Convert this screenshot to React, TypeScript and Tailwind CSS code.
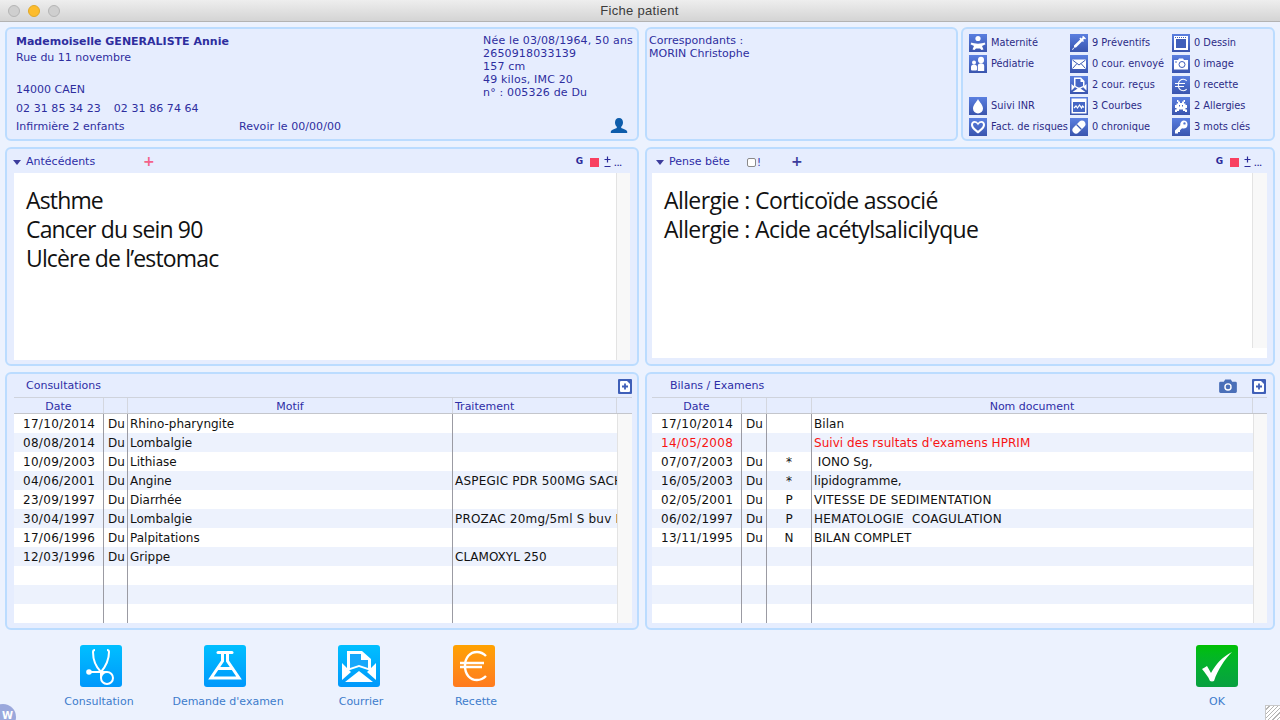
import type { ReactNode } from "react";

const consultations = [
  ["17/10/2014", "Du", "Rhino-pharyngite", ""],
  ["08/08/2014", "Du", "Lombalgie", ""],
  ["10/09/2003", "Du", "Lithiase", ""],
  ["04/06/2001", "Du", "Angine", "ASPEGIC PDR 500MG SACHET"],
  ["23/09/1997", "Du", "Diarrhée", ""],
  ["30/04/1997", "Du", "Lombalgie", "PROZAC 20mg/5ml S buv Fl"],
  ["17/06/1996", "Du", "Palpitations", ""],
  ["12/03/1996", "Du", "Grippe", "CLAMOXYL 250"],
  ["", "", "", ""],
  ["", "", "", ""],
  ["", "", "", ""],
];

const bilans = [
  ["17/10/2014", "Du", "", "Bilan"],
  ["14/05/2008", "", "", "Suivi des rsultats d'examens HPRIM"],
  ["07/07/2003", "Du", "*", "\u00a0IONO Sg,"],
  ["16/05/2003", "Du", "*", "lipidogramme,"],
  ["02/05/2001", "Du", "P", "VITESSE DE SEDIMENTATION"],
  ["06/02/1997", "Du", "P", "HEMATOLOGIE\u00a0 COAGULATION"],
  ["13/11/1995", "Du", "N", "BILAN COMPLET"],
  ["", "", "", ""],
  ["", "", "", ""],
  ["", "", "", ""],
  ["", "", "", ""],
];

function Panel({ className, children }: { className: string; children: ReactNode }) {
  return (
    <div className={`rounded-[6px] border-2 border-[#bbdcff] bg-[#e6edfe] ${className}`}>{children}</div>
  );
}

function Tile({ children }: { children: ReactNode }) {
  return (
    <span className="flex h-[18px] w-[18px] shrink-0 items-center justify-center bg-gradient-to-b from-[#5a7fe0] to-[#3a55ae]">
      <svg viewBox="0 0 18 18" className="h-[18px] w-[18px]" fill="#fff" stroke="none">
        {children}
      </svg>
    </span>
  );
}

function SideItem({ icon, label }: { icon?: ReactNode; label?: string }) {
  return (
    <div className="flex h-[18px] items-center gap-[4px] whitespace-nowrap text-[9.8px] text-[#2b2b86]">
      {icon ? <Tile>{icon}</Tile> : null}
      {label}
    </div>
  );
}

function Triangle() {
  return <span className="h-0 w-0 border-x-[4.5px] border-t-[5px] border-x-transparent border-t-[#3c3c9c]" />;
}

function Tools() {
  return (
    <div className="flex items-center text-[#2a2a9a]">
      <span className="mr-[7px] text-[9px] font-bold">G</span>
      <span className="mr-[5px] h-[9px] w-[9px] bg-[#f84060]" />
      <svg viewBox="0 0 7 12" className="mr-[3px] h-[12px] w-[7px]" stroke="#2a2a9a" strokeWidth="1.200">
        <path d="M.5 3.500h6M3.500 .5v6M.5 10.500h6" />
      </svg>
      <span className="mt-[4px] text-[7px] leading-[8px] font-bold">...</span>
    </div>
  );
}

function AddButton() {
  return (
    <svg viewBox="0 0 14 15" className="h-[15px] w-[14px]">
      <rect width="14" height="15" rx="1" fill="#3f5fb8" />
      <path d="M3 2h6l3 3v7a1 1 0 0 1-1 1H3a1 1 0 0 1-1-1V3a1 1 0 0 1 1-1z" fill="#fff" />
      <path d="M7 4.500v6M4 7.500h6" stroke="#3f5fb8" strokeWidth="1.800" />
    </svg>
  );
}

function HeaderCell({ className, children }: { className: string; children?: ReactNode }) {
  return (
    <div className={`flex h-[15px] items-center border-r border-[#d4d7df] pt-[3px] text-[11px] text-[#2e2ea6] ${className}`}>
      {children}
    </div>
  );
}

function RowCell({ className, children }: { className: string; children?: ReactNode }) {
  return (
    <div className={`h-[19px] overflow-hidden whitespace-nowrap border-r border-[#9b9ba3] text-[12px] leading-[21px] ${className}`}>
      {children}
    </div>
  );
}

function ActionButton({ width, label, from, to, iconClass, children }: { width: string; label: string; from: string; to: string; iconClass?: string; children: ReactNode }) {
  return (
    <div className={`flex flex-col items-center ${width}`}>
      <span className={`h-[42px] w-[42px] rounded-[3px] bg-gradient-to-b ${from} ${to} ${iconClass ?? ""}`}>
        <svg viewBox="0 0 42 42" className="h-[42px] w-[42px]" fill="none" stroke="#fff" strokeWidth="2">
          {children}
        </svg>
      </span>
      <span className="mt-[7px] whitespace-nowrap text-[11px] text-[#3d7ccc]">{label}</span>
    </div>
  );
}

export default function App() {
  return (
    <div className="relative flex h-[720px] w-[1280px] flex-col overflow-hidden bg-[#ecf2fe] font-['DejaVu_Sans','Liberation_Sans',sans-serif]">
      {/* title bar */}
      <div className="flex h-[22px] shrink-0 items-center border-b border-[#b3b3b3] bg-gradient-to-b from-[#eeeeee] to-[#d4d4d4]">
        <div className="flex w-[70px] items-center gap-[8px] pl-[8px]">
          <span className="h-[12px] w-[12px] rounded-full border border-[#b5b5b5] bg-[#cfcfcf]" />
          <span className="h-[12px] w-[12px] rounded-full border border-[#e0a828] bg-[#fdbc2c]" />
          <span className="h-[12px] w-[12px] rounded-full border border-[#b5b5b5] bg-[#cfcfcf]" />
        </div>
        <div className="flex-1 pr-[71px] text-center font-['Liberation_Sans',sans-serif] text-[13px] tracking-[0.3px] text-[#3c3c3c]">Fiche patient</div>
      </div>

      <div className="flex flex-col gap-[6px] px-[5px] pt-[5px]">
        {/* top row */}
        <div className="flex h-[114px]">
          <Panel className="flex w-[634px] justify-between py-[5px] pl-[9px] pr-[4px] text-[11px] text-[#2e2e9e]">
            <div className="flex flex-col">
              <div className="h-[16px] leading-[16px] font-bold">Mademoiselle GENERALISTE Annie</div>
              <div className="h-[16px] leading-[16px]">Rue du 11 novembre</div>
              <div className="mt-[16px] h-[16px] leading-[16px]">14000 CAEN</div>
              <div className="mt-[2px] flex h-[18px] gap-[13px] leading-[18px] tracking-[0.06px]">
                <span>02 31 85 34 23</span>
                <span>02 31 86 74 64</span>
              </div>
              <div className="flex h-[18px] leading-[18px]">
                <span className="w-[223px]">Infirmière 2 enfants</span>
                <span className="tracking-[0.06px]">Revoir le 00/00/00</span>
              </div>
            </div>
            <div className="flex flex-col">
              <div className="text-[11px] leading-[13px] tracking-[0.16px]">
                <div>Née le 03/08/1964, 50 ans</div>
                <div>2650918033139</div>
                <div>157 cm</div>
                <div>49 kilos, IMC 20</div>
                <div>n° : 005326 de Du</div>
              </div>
              <div className="mt-auto flex justify-end pr-[5px]">
                <svg viewBox="0 0 18 16" className="h-[16px] w-[18px]" fill="#0d5cab">
                  <path d="M9 0c2.600 0 4 2 4 4.400 0 1.800-.8 3.300-1.800 4.300v1.300c2.500.8 5.300 1.800 6 3.400V15H.8v-1.600c.7-1.600 3.500-2.600 6-3.400V8.700C5.800 7.700 5 6.200 5 4.400 5 2 6.400 0 9 0z" />
                </svg>
              </div>
            </div>
          </Panel>

          <Panel className="ml-[6px] w-[313px] px-[2px] py-[5px] text-[11px] leading-[13px] text-[#2e2e9e]">
            <div>Correspondants :</div>
            <div>MORIN Christophe</div>
          </Panel>

          <Panel className="ml-[3px] grid w-[314px] grid-cols-[101px_102px_1fr] content-start pl-[6px] pt-[5px]">
            <div className="flex flex-col gap-[3px]">
              <SideItem label="Maternité" icon={<><circle cx="9" cy="4.500" r="2.600" /><path d="M2.500 8.500c2.500 1.500 10.500 1.500 13 0l1 1.800-3.500 1.700 1.500 3.500-2 .5-1.500-1.500h-4L5.500 16l-2-.5L5 12l-3.500-1.700z" /></>} />
              <SideItem label="Pédiatrie" icon={<><circle cx="5" cy="7.500" r="2" /><path d="M2 12a3 2.500 0 0 1 6 0v2.500a1 1 0 0 1-1 1H3a1 1 0 0 1-1-1z" /><ellipse cx="12" cy="5" rx="3" ry="3.200" /><path d="M8.800 11c0-2 1.200-2.800 3.200-2.800s3.200.8 3.200 2.800v5H8.800z" /></>} />
              <SideItem />
              <SideItem label="Suivi INR" icon={<path d="M9 2c1.500 3 5 6 5 9.500a5 5 0 0 1-10 0C4 8 7.500 5 9 2z" />} />
              <SideItem label="Fact. de risques" icon={<path fillRule="evenodd" d="M9 15.500C5 12.500 2 10 2 6.700 2 4.500 3.700 3 5.500 3 7 3 8.300 3.800 9 5c.7-1.200 2-2 3.500-2C14.300 3 16 4.500 16 6.700c0 3.300-3 5.800-7 8.800zm0-2.700c2.600-2 5-4 5-6.100 0-1-.8-1.900-1.700-1.900-1.400 0-2.500 1.100-3.300 2.700C8.200 5.900 7.100 4.800 5.700 4.800 4.800 4.800 4 5.700 4 6.700c0 2.100 2.400 4.100 5 6.100z" />} />
            </div>
            <div className="flex flex-col gap-[3px]">
              <SideItem label="9 Préventifs" icon={<path d="M13.500 2l2.500 2.500-1 1-.7-.7-1.300 1.300 1 1-1 1-.8-.8-6.200 6.200H4.500L2.800 16 2 15.200l2-1.800v-1.800l6.200-6.200-.8-.8 1-1 1 1L12.700 3.300 12 2.800z" />} />
              <SideItem label="0 cour. envoyé" icon={<><path d="M2 4.500h14V14H2z" /><path d="M2.500 5L9 10l6.500-5M2.500 13.500L7 8.500M15.500 13.500L11 8.500" fill="none" stroke="#3d5cb5" strokeWidth="1" /></>} />
              <SideItem label="2 cour. reçus" icon={<><path d="M4 1.500h7l3.500 3.500v5.500L9 13.500 4 10.500z" /><path d="M5.500 3h5v3h2.500v4L9 11.800 5.500 10z" fill="#4566c5" /><path d="M1.500 8L5 11l-3.500 3.500zM16.500 8L13 11l3.500 3.500zM2.500 16L9 11.500 15.500 16z" /></>} />
              <SideItem label="3 Courbes" icon={<><path d="M1.500 1.500h15v15h-15z" /><path d="M3 5h12v10H3z" fill="#4566c5" /><path d="M4 11l2-2 1.500 2 2-3 2 3 1-2 1.500 1.500" fill="none" stroke="#fff" strokeWidth="1.200" /></>} />
              <SideItem label="0 chronique" icon={<><path d="M12 2.500a3.500 3.500 0 0 1 2.500 6l-6 6a3.500 3.500 0 0 1-5-5l6-6c.7-.6 1.500-1 2.500-1z" /><path d="M6.500 6.500l5 5" stroke="#3d5cb5" strokeWidth="1.200" /></>} />
            </div>
            <div className="flex flex-col gap-[3px]">
              <SideItem label="0 Dessin" icon={<><path d="M2 2h14v14H2z" /><path d="M4 5h10v9H4z" fill="#3f5eb9" /><path d="M3 3.500h12" stroke="#3f5eb9" strokeWidth="1" strokeDasharray="1 1" /></>} />
              <SideItem label="0 image" icon={<><path d="M2 5h4l1-1.500h4L12 5h4v9.500H2z" /><circle cx="10" cy="9.500" r="3" fill="none" stroke="#3f5eb9" strokeWidth="1" /><circle cx="4" cy="7" r=".8" fill="#3f5eb9" /></>} />
              <SideItem label="0 recette" icon={<path d="M15 4.500c-1-1-2.200-1.700-3.700-1.700C8.500 2.800 6.600 4.700 6 7H3v1h2.900v2H3v1h3c.6 2.300 2.500 4.200 5.300 4.200 1.500 0 2.700-.7 3.700-1.700l-.7-.7c-.8.8-1.800 1.400-3 1.400-2.100 0-3.700-1.400-4.200-3.200H12v-1H6.900V8H13V7H7.100c.5-1.800 2.100-3.200 4.200-3.200 1.200 0 2.200.6 3 1.400z" />} />
              <SideItem label="2 Allergies" icon={<path fillRule="evenodd" d="M5 3h1.500v1.500H8V6h2V4.500h1.500V3H13v2h-1v1.500h1.500V8H15v3h-1.500v1.500H15V15h-2v-1h-2v-1.500H7V14H5v1H3v-2.500h1.500V11H3V8h1.500V6.500H6V5H5zm2 5v1.500h1V8zm3 0v1.500h1V8z" />} />
              <SideItem label="3 mots clés" icon={<path fillRule="evenodd" d="M11.500 2.500a4 4 0 0 1 0 8c-.5 0-1-.1-1.400-.3L8 12.300V14H6v1.500H3v-3l5.300-5.300a4 4 0 0 1 3.200-4.700zm1 1.700a1.200 1.200 0 1 0 0 2.400 1.200 1.200 0 0 0 0-2.400z" />} />
            </div>
          </Panel>
        </div>

        {/* notes row */}
        <div className="flex h-[219px] gap-[6px]">
          <Panel className="flex w-[634px] flex-col">
            <div className="flex h-[24px] shrink-0 items-center pl-[6px] pr-[15px] pt-[2px] text-[11px] text-[#2e2ea6]">
              <Triangle />
              <span className="ml-[5px] w-[117px]">Antécédents</span>
              <span className="-mt-[2px] text-[14px] leading-none font-bold text-[#f4628a]">+</span>
              <span className="flex-1" />
              <Tools />
            </div>
            <div className="mb-[4px] ml-[7px] mr-[7px] flex flex-1">
              <div className="flex-1 bg-white pl-[12px] pt-[13px] font-['Open_Sans',sans-serif] text-[23px] leading-[29px] tracking-[-0.85px] text-[#111]">
                <div>Asthme</div>
                <div>Cancer du sein 90</div>
                <div>Ulcère de l’estomac</div>
              </div>
              <div className="w-[14px] border-l border-[#e3e3e3] bg-[#f8f8f8]" />
            </div>
          </Panel>
          <Panel className="flex w-[630px] flex-col">
            <div className="flex h-[24px] shrink-0 items-center pl-[9px] pr-[11px] pt-[2px] text-[11px] text-[#2e2ea6]">
              <Triangle />
              <span className="ml-[5px] w-[78px]">Pense bête</span>
              <span className="h-[9px] w-[9px] rounded-[2px] border border-[#8a8a8a] bg-white" />
              <span className="ml-[1px] w-[34px] text-[10px]">!</span>
              <span className="-mt-[2px] text-[14px] leading-none font-bold text-[#3c3c9c]">+</span>
              <span className="flex-1" />
              <Tools />
            </div>
            <div className="mb-[6px] ml-[5px] mr-[6px] flex flex-1 flex-col bg-white">
              <div className="flex flex-1">
                <div className="flex-1 pl-[12px] pt-[13px] font-['Open_Sans',sans-serif] text-[23px] leading-[29px] tracking-[-0.6px] text-[#111]">
                  <div>Allergie : Corticoïde associé</div>
                  <div>Allergie : Acide acétylsalicilyque</div>
                </div>
                <div className="w-[15px] border-l border-[#e3e3e3] bg-[#f8f8f8]" />
              </div>
              <div className="h-[10px] shrink-0" />
            </div>
          </Panel>
        </div>

        {/* tables row */}
        <div className="flex h-[258px] gap-[6px]">
          <Panel className="flex w-[634px] flex-col">
            <div className="flex h-[23px] shrink-0 items-center justify-between pl-[19px] pr-[5px] pt-[1px] text-[11px] text-[#2e2ea6]">
              <span>Consultations</span>
              <AddButton />
            </div>
            <div className="ml-[7px] mr-[5px] flex flex-1 flex-col border-t border-[#cfd3dc]">
              <div className="flex border-b border-[#c4c6cc]">
                <HeaderCell className="w-[90px] justify-center">Date</HeaderCell>
                <HeaderCell className="w-[24px]" />
                <HeaderCell className="w-[325px] justify-center">Motif</HeaderCell>
                <HeaderCell className="w-[164px] pl-[2px]">Traitement</HeaderCell>
                <HeaderCell className="flex-1 border-r-0" />
              </div>
              <div className="flex">
                <div className="w-[603px] flex-none">
                  {consultations.map((r, i) => (
                    <div key={i} className={`flex text-[#111] ${i % 2 ? "bg-[#edf2fd]" : "bg-white"}`}>
                      <RowCell className="w-[90px] pl-[9px] tracking-[0.3px]">{r[0]}</RowCell>
                      <RowCell className="w-[24px] pl-[4px]">{r[1]}</RowCell>
                      <RowCell className="w-[325px] pl-[2px]">{r[2]}</RowCell>
                      <RowCell className={`w-[164px] border-r-0 pl-[2px] ${r[3].length > 20 ? "tracking-[0.2px]" : ""}`}>{r[3]}</RowCell>
                    </div>
                  ))}
                </div>
                <div className="flex-1 border-l border-[#e3e3e3] bg-[#f8f8f8]" />
              </div>
            </div>
          </Panel>
          <Panel className="flex w-[630px] flex-col">
            <div className="flex h-[23px] shrink-0 items-center justify-between pl-[23px] pr-[7px] pt-[1px] text-[11px] text-[#2e2ea6]">
              <span>Bilans / Examens</span>
              <span className="flex items-center gap-[15px]">
                <svg viewBox="0 0 19 15" className="h-[14px] w-[18px]" fill="#4a6fb8">
                  <path d="M1.500 3H5l1.500-2.500h6L14 3h3.500A1.500 1.500 0 0 1 19 4.500v9a1.500 1.500 0 0 1-1.500 1.500h-16A1.500 1.500 0 0 1 0 13.500v-9A1.500 1.500 0 0 1 1.500 3z" />
                  <circle cx="9.500" cy="8.500" r="4" fill="#fff" />
                  <circle cx="9.500" cy="8.500" r="2.500" fill="#4a6fb8" />
                </svg>
                <AddButton />
              </span>
            </div>
            <div className="ml-[5px] mr-[6px] flex flex-1 flex-col border-t border-[#cfd3dc]">
              <div className="flex border-b border-[#c4c6cc]">
                <HeaderCell className="w-[90px] justify-center">Date</HeaderCell>
                <HeaderCell className="w-[25px]" />
                <HeaderCell className="w-[45px]" />
                <HeaderCell className="w-[441px] justify-center">Nom document</HeaderCell>
                <HeaderCell className="flex-1 border-r-0" />
              </div>
              <div className="flex">
                <div className="w-[601px] flex-none">
                  {bilans.map((r, i) => (
                    <div key={i} className={`flex ${i === 1 ? "text-[#f81414]" : "text-[#111]"} ${i % 2 ? "bg-[#edf2fd]" : "bg-white"}`}>
                      <RowCell className="w-[90px] pl-[9px] tracking-[0.3px]">{r[0]}</RowCell>
                      <RowCell className="w-[25px] pl-[4px]">{r[1]}</RowCell>
                      <RowCell className="w-[45px] text-center">{r[2]}</RowCell>
                      <RowCell className={`w-[441px] border-r-0 pl-[2px] ${r[3].length > 20 && r[3] === r[3].toUpperCase() ? "tracking-[0.25px]" : "tracking-[0.05px]"}`}>{r[3]}</RowCell>
                    </div>
                  ))}
                </div>
                <div className="flex-1 border-l border-[#e3e3e3] bg-[#f8f8f8]" />
              </div>
            </div>
          </Panel>
        </div>
      </div>

      {/* action buttons */}
      <div className="flex items-start pl-[59px] pr-[42px] pt-[15px]">
        <ActionButton width="w-[80px]" label="Consultation" from="from-[#00bfff]" to="to-[#0098fb]" iconClass="ml-[4px]">
          <path d="M15 5c-1.500 0-2 1-2 2 0 6 2 14 8 20 5-6 8-14 8-20 0-1-.5-2-2-2" />
          <path d="M21 27v6M9 27h18" />
          <circle cx="9" cy="27" r="1.800" fill="#fff" />
          <circle cx="27" cy="33" r="6" />
        </ActionButton>
        <div className="ml-[34px]">
          <ActionButton width="w-[110px]" label="Demande d'examen" from="from-[#00bfff]" to="to-[#0098fb]" iconClass="mr-[6px]">
            <path d="M14 7.500h14" strokeWidth="3" strokeLinecap="round" />
            <path d="M18.500 8v8L7 33h28L23.500 16V8" strokeWidth="3" />
            <path d="M13 23.500h16" strokeWidth="3" />
          </ActionButton>
        </div>
        <div className="ml-[38px]">
          <ActionButton width="w-[80px]" label="Courrier" from="from-[#00bfff]" to="to-[#0098fb]" iconClass="mr-[4px]">
            <path d="M9 6h15l9 8v12l-12-4-12 4z" fill="#fff" stroke="none" />
            <path d="M12 9h11v6h7v8l-9-3-9 3z" fill="#18a8fb" stroke="none" />
            <path d="M4 18l9 9-9 8zM38 18l-9 9 9 8zM7 37l14-11 14 11z" fill="#fff" stroke="none" />
          </ActionButton>
        </div>
        <div className="ml-[35px]">
          <ActionButton width="w-[80px]" label="Recette" from="from-[#ffa200]" to="to-[#ff7a1e]" iconClass="mr-[4px]">
            <path d="M33 11c-2.500-2.500-5.500-4-9-4-7 0-12 5.500-12 14s5 14 12 14c3.500 0 6.500-1.500 9-4" strokeWidth="2.400" />
            <path d="M7 18h24M7 22h22" strokeWidth="2.400" />
          </ActionButton>
        </div>
        <div className="ml-auto">
          <ActionButton width="w-[42px]" label="OK" from="from-[#00c000]" to="to-[#08a040]">
            <path d="M6 24c2-1 3.500-2 5-3l4 7C20 19 26 12 36 7c-7 7-14 17-18 29-1 .5-3 .5-4 0-2-5-5-8-8-12z" fill="#fff" stroke="none" />
          </ActionButton>
        </div>
      </div>

      {/* window corner bits */}
      <div className="absolute -bottom-[10px] -left-[10px] flex h-[26px] w-[26px] items-start justify-center rounded-full bg-[#9aa8dc] pt-[4px] pl-[9px] text-[10px] font-bold text-white">W</div>
      <div className="absolute bottom-0 right-0 h-[15px] w-[15px] border-l border-t border-[#c8c8c8] bg-[repeating-linear-gradient(135deg,#fff_0px,#fff_2px,#b5b5b5_2px,#b5b5b5_3px)]" />
    </div>
  );
}
